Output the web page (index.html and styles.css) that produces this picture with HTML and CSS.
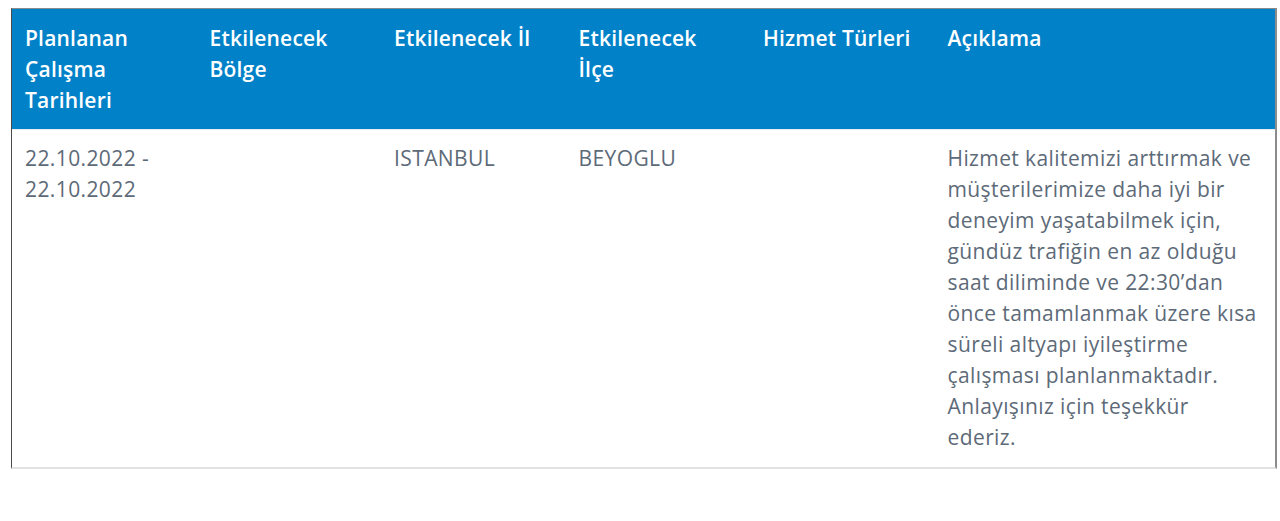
FILE: index.html
```html
<!DOCTYPE html>
<html lang="tr">
<head>
    <meta charset="UTF-8">
    <meta name="viewport" content="width=device-width, initial-scale=1.0">
    <title>Planlanan Çalışmalar</title>
    <link rel="stylesheet" href="styles.css">
</head>
<body>
    <!-- Planned works table -->
    <div class="table-wrap">
        <table class="works">
            <colgroup>
                <col class="col-std">
                <col class="col-std">
                <col class="col-std">
                <col class="col-std">
                <col class="col-std">
                <col class="col-wide">
            </colgroup>
            <thead>
                <tr>
                    <th>Planlanan Çalışma Tarihleri</th>
                    <th>Etkilenecek Bölge</th>
                    <th>Etkilenecek İl</th>
                    <th>Etkilenecek İlçe</th>
                    <th>Hizmet Türleri</th>
                    <th>Açıklama</th>
                </tr>
            </thead>
            <tbody>
                <tr>
                    <td>22.10.2022 - 22.10.2022</td>
                    <td></td>
                    <td>ISTANBUL</td>
                    <td>BEYOGLU</td>
                    <td></td>
                    <td>Hizmet kalitemizi arttırmak ve müşterilerimize daha iyi bir deneyim yaşatabilmek için, gündüz trafiğin en az olduğu saat diliminde ve 22:30’dan önce tamamlanmak üzere kısa süreli altyapı iyileştirme çalışması planlanmaktadır. Anlayışınız için teşekkür ederiz.</td>
                </tr>
            </tbody>
        </table>
    </div>
</body>
</html>
```

FILE: styles.css
```css
* {
    margin: 0;
    padding: 0;
    box-sizing: border-box;
}

body {
    font-family: "Open Sans", Lato, sans-serif;
    background-color: #fff;
    padding: 8px 3px 0 11px;
}

.table-wrap {
    border-top: 1px solid #8a8a8a;
    border-right: 2px solid #8c8c8c;
    border-bottom: 2px solid #e2e2e2;
    border-left: 1px solid #4a4a4a;
}

.works {
    width: 100%;
    border-collapse: collapse;
    table-layout: fixed;
}

.col-std {
    width: 184.5px;
}

.works th,
.works td {
    text-align: left;
    vertical-align: top;
    font-size: 21px;
    line-height: 31px;
    padding: 14px 13px 13px 13px;
}

.works th {
    background-color: #0182c8;
    color: #fff;
    font-weight: 600;
    letter-spacing: 0.2px;
    height: 120px;
    border-bottom: 1px solid #e6eef4;
}

.works td {
    color: #5d6a78;
    font-weight: 400;
    letter-spacing: 0.4px;
    padding-top: 13px;
    padding-bottom: 14px;
}
```
